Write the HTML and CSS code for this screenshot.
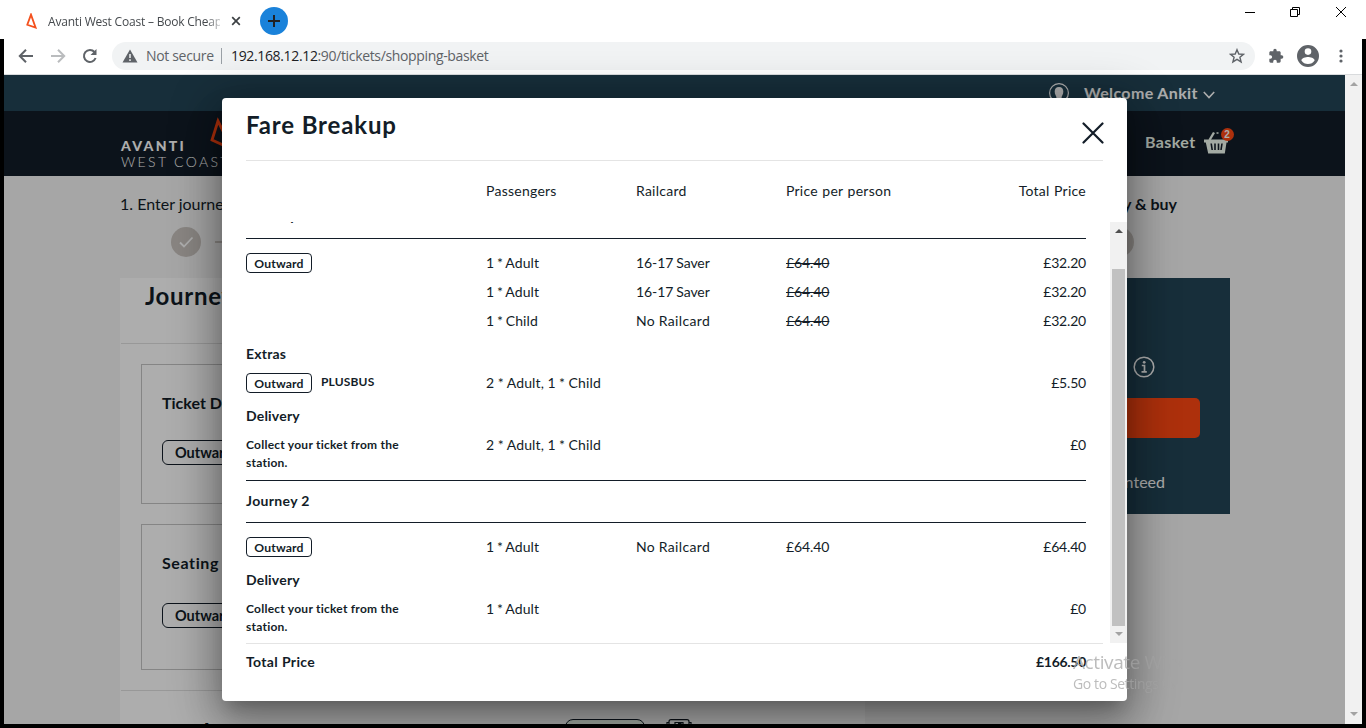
FILE: index.html
```html
<!DOCTYPE html>
<html lang="en">
<head>
<meta charset="utf-8">
<title>Avanti West Coast – Book Cheap</title>
<link rel="stylesheet" href="styles.css">
</head>
<body>
<div class="window">
  <div class="tabbar">
    <svg class="favicon" width="12" height="16" viewBox="0 0 12 16"><path d="M5 1.600 1.300 11.800 9.600 14.600Z" fill="none" stroke="#f4511e" stroke-width="1.800"/></svg>
    <span class="tab-title">Avanti West Coast – Book Cheap</span>
    <svg class="tab-close" width="10" height="10" viewBox="0 0 10 10"><path d="M1.200 1.200 8.800 8.800M8.800 1.200 1.200 8.800" stroke="#3c4043" stroke-width="1.700"/></svg>
    <span class="new-tab"><svg width="14" height="14" viewBox="0 0 14 14"><path d="M7 1V13M1 7H13" stroke="#202124" stroke-width="2"/></svg></span>
    <div class="win-controls">
      <svg width="10" height="12" viewBox="0 0 10 12"><path d="M0 6.500H10" stroke="#000"/></svg>
      <svg width="10" height="12" viewBox="0 0 10 12"><path d="M.5 3.500H7.500V10.500H.5ZM2.500 3.500V1.500H9.500V8.500H7.500" fill="none" stroke="#000"/></svg>
      <svg width="10" height="12" viewBox="0 0 10 12"><path d="M0 1 10 11M10 1 0 11" stroke="#000"/></svg>
    </div>
  </div>
  <div class="viewport">
    <div class="toolbar">
      <svg class="nav-ico" width="16" height="16" viewBox="0 0 16 16"><path d="M15 8H2M8 1.800 1.800 8 8 14.200" fill="none" stroke="#5f6368" stroke-width="2"/></svg>
      <svg class="nav-ico" width="16" height="16" viewBox="0 0 16 16"><path d="M1 8H14M8 1.800 14.200 8 8 14.200" fill="none" stroke="#babcbe" stroke-width="2"/></svg>
      <svg class="nav-ico" width="16" height="16" viewBox="0 0 16 16"><path d="M13.600 10A6 6 0 1 1 12.500 4" fill="none" stroke="#5f6368" stroke-width="2"/><path d="M14.500 1V7H8.500Z" fill="#5f6368"/></svg>
      <div class="omnibox">
        <svg width="16" height="14" viewBox="0 0 16 14"><path d="M8 .5 15.500 13.500H.5Z" fill="#5f6368"/><path d="M8 5V9M8 10.300V12" stroke="#f1f3f4" stroke-width="1.500"/></svg>
        <span class="secure">Not secure</span><span class="bar"></span>
        <span class="url"><b>192.168.12.12</b>:90/tickets/shopping-basket</span>
        <svg class="star" width="16" height="16" viewBox="0 0 16 16"><path d="M8 1.700 9.800 6 14.500 6.300 10.900 9.300 12.100 13.900 8 11.400 3.900 13.900 5.100 9.300 1.500 6.300 6.200 6Z" fill="none" stroke="#5f6368" stroke-width="1.400"/></svg>
      </div>
      <svg class="puzzle" width="16" height="16" viewBox="0 0 24 24"><path d="M20.500 11H19V7c0-1.100-.9-2-2-2h-4V3.500a2.500 2.500 0 0 0-5 0V5H4c-1.100 0-2 .9-2 2v3.800h1.500a2.700 2.700 0 0 1 0 5.400H2V20c0 1.100.9 2 2 2h3.800v-1.500a2.700 2.700 0 0 1 5.400 0V22H17c1.100 0 2-.9 2-2v-4h1.500a2.500 2.500 0 0 0 0-5z" fill="#5f6368"/></svg>
      <svg class="avatar" width="22" height="22" viewBox="2 2 20 20"><path d="M12 2a10 10 0 1 0 0 20 10 10 0 0 0 0-20zm0 3a3 3 0 1 1 0 6 3 3 0 0 1 0-6zm0 14.200a7.200 7.200 0 0 1-6-3.220c.03-1.990 4-3.080 6-3.080s5.970 1.090 6 3.080a7.200 7.200 0 0 1-6 3.220z" fill="#5f6368"/></svg>
      <svg class="dots" width="4" height="14" viewBox="0 0 4 14"><g fill="#5f6368"><circle cx="2" cy="2" r="1.600"/><circle cx="2" cy="7" r="1.600"/><circle cx="2" cy="12" r="1.600"/></g></svg>
    </div>
    <div class="content">
      <div class="site">
        <div class="userbar">
          <svg width="22" height="22" viewBox="0 0 22 22"><circle cx="11" cy="11" r="9.400" fill="none" stroke="#fff" stroke-width="1.200"/><path d="M11 5c-3 0-4.300 2-4.300 4.500 0 3 1.300 4 1.700 5.500v2.500h5.200V15c.4-1.500 1.700-2.500 1.700-5.500C15.300 7 14 5 11 5z" fill="#fff"/></svg>
          <span class="welcome">Welcome Ankit</span>
          <svg class="chevron" width="12" height="8" viewBox="0 0 12 8"><path d="M.8 1 6 6.500 11.200 1" fill="none" stroke="#fff" stroke-width="1.600"/></svg>
        </div>
        <div class="navbar">
          <div class="logo"><strong>AVANTI</strong><span>WEST COAST</span></div>
          <svg class="logo-mark" width="30" height="36" viewBox="0 0 30 36"><path d="M8 5 2 24 22 33Z" fill="none" stroke="#ff4713" stroke-width="2.800"/></svg>
          <div class="basket"><span>Basket</span>
            <span class="basket-ico"><svg width="28" height="26" viewBox="0 0 28 26"><path d="M0 9.500H24V12.500H22.500L20.800 23.500H4.200L1.800 12.500H0Z" fill="#f1fbf0"/><path d="M5.500 10 10 2.500" stroke="#f1fbf0" stroke-width="2.400"/><path d="M12.500 3h2" stroke="#f1fbf0" stroke-width="1.500"/><path d="M7.200 13.500 8.200 20M11 13.500V20M14.500 13.500V20M18 13.500 17 20" stroke="#131d28" stroke-width="1.600"/></svg><i>2</i></span>
          </div>
        </div>
        <div class="steps">
          <div class="step first"><span>1. Enter journey details</span><div class="track"><svg class="check" width="30" height="30" viewBox="0 0 30 30"><circle cx="15" cy="15" r="15" fill="#cac5c0"/><path d="M9 15.500 13 19.500 21.500 10.500" fill="none" stroke="#fff" stroke-width="1.800"/></svg><hr></div></div>
          <div class="step last"><span>4. Pay &amp; buy</span><i></i></div>
        </div>
        <div class="columns">
          <div class="card">
            <h2>Journey</h2>
            <div class="panel"><h3>Ticket Delivery</h3><span class="tag">Outward</span></div>
            <div class="panel second"><h3>Seating</h3><span class="tag">Outward</span></div>
            <div class="travel"><h2>Travel</h2><span class="stub"></span>
              <svg width="26" height="12" viewBox="0 0 26 12"><path d="M1 8V3.500H3M23 3.500H25V8M3 8V2.700Q3 .7 5 .7H21Q23 .7 23 2.700V8M9 8V3.500H17V8M12 4.500H15V8" fill="none" stroke="#10181f" stroke-width="1.200"/></svg></div>
          </div>
          <div class="summary">
            <svg width="22" height="22" viewBox="0 0 22 22"><circle cx="11" cy="11" r="9.800" fill="none" stroke="#fff" stroke-width="1.500"/><path d="M8.800 9.500H11.500V15.500M8.500 15.800H13.800" fill="none" stroke="#fff" stroke-width="1.700"/><circle cx="11.200" cy="6.300" r="1.400" fill="#fff"/></svg>
            <div class="cta"></div><p>guaranteed</p>
          </div>
        </div>
        <div class="backdrop"></div>
      </div>
      <div class="scrollbar"><b class="up"></b><b class="down"></b></div>
    </div>
  </div>
</div>

<div class="modal">
  <div class="modal-head"><h1>Fare Breakup</h1><svg width="22" height="22" viewBox="0 0 22 22"><path d="M1.500 1.500 20.500 20.500M20.500 1.500 1.500 20.500" stroke="#131d28" stroke-width="2.200" stroke-linecap="round"/></svg></div>
  <div class="row head"><span></span><span>Passengers</span><span>Railcard</span><span>Price per person</span><span class="r">Total Price</span></div>
  <div class="scroller">
    <div class="list">
      <div class="journey top">Journey 1</div>
      <div class="row pad"><span><em class="pill">Outward</em></span><span class="who">1 * Adult</span><span class="num">16-17 Saver</span><s>£64.40</s><span class="r num">£32.20</span></div>
      <div class="row"><span></span><span class="who">1 * Adult</span><span class="num">16-17 Saver</span><s>£64.40</s><span class="r num">£32.20</span></div>
      <div class="row"><span></span><span class="who">1 * Child</span><span class="card-name">No Railcard</span><s>£64.40</s><span class="r num">£32.20</span></div>
      <div class="group">Extras</div>
      <div class="row"><span><em class="pill">Outward</em><small>PLUSBUS</small></span><span>2 * Adult, 1 * Child</span><span></span><span></span><span class="r num">£5.50</span></div>
      <div class="group">Delivery</div>
      <div class="row tall"><p>Collect your ticket from the station.</p><span>2 * Adult, 1 * Child</span><span></span><span></span><span class="r num">£0</span></div>
      <div class="journey">Journey 2</div>
      <div class="row pad"><span><em class="pill">Outward</em></span><span class="who">1 * Adult</span><span class="card-name">No Railcard</span><span class="num">£64.40</span><span class="r num">£64.40</span></div>
      <div class="group">Delivery</div>
      <div class="row tall"><p>Collect your ticket from the station.</p><span class="who">1 * Adult</span><span></span><span></span><span class="r num">£0</span></div>
    </div>
    <div class="inner-bar"><b class="up dark"></b><div class="thumb"></div><b class="down"></b></div>
  </div>
  <div class="total"><span>Total Price</span><span class="amount">£166.50</span></div>
</div>
<div class="watermark"><div>Activate Windows</div><p>Go to Settings to</p></div>
</body>
</html>
```
FILE: styles.css
```css
* { box-sizing: border-box; }
body, h1, h2, h3, p { margin: 0; }
body { width: 1366px; height: 728px; overflow: hidden; position: relative; background: #fff; font-family: Lato, sans-serif; color: #131d28; }
svg { display: block; flex: none; }
.window { display: flex; flex-direction: column; height: 728px; }

.tabbar { height: 39px; display: flex; align-items: center; padding: 3px 20px 0 26px; font: 12px "Open Sans", sans-serif; }
.tab-title { margin-left: 10px; width: 172px; overflow: hidden; white-space: nowrap; letter-spacing: -.2px; color: #45494d; -webkit-mask-image: linear-gradient(90deg, #000 92%, transparent 103%); }
.tab-close { margin-left: 11px; }
.new-tab { width: 28px; height: 28px; margin-left: 19px; border-radius: 50%; background: #1a82da; display: grid; place-items: center; }
.win-controls { margin-left: auto; display: flex; gap: 36px; align-self: flex-start; padding-top: 3px; }
.win-controls svg:first-child { margin-right: -1px; }

.viewport { flex: 1; display: flex; flex-direction: column; border: solid #000; border-width: 0 4px 4px; }
.toolbar { height: 36px; display: flex; align-items: center; padding: 0 18px 2px 14px; border-bottom: 1px solid #d9dbdd; background: #fff; }
.nav-ico { margin-right: 16px; }
.omnibox { flex: none; width: 1143px; height: 28px; margin-left: -2px; padding: 0 10px; border-radius: 14px; background: #f1f3f4; display: flex; align-items: center; font: 14px "Open Sans", sans-serif; color: #5f6368; }
.secure { margin-left: 8px; width: 67px; white-space: nowrap; letter-spacing: -.33px; }
.bar { width: 1px; height: 16px; margin: 0 9px 0 8px; background: #9aa0a6; }
.url { letter-spacing: -.35px; }
.url b { font-weight: 400; color: #202124; }
.star { margin-left: auto; }
.puzzle { margin-left: 13px; }
.avatar { margin-left: 13px; }
.dots { margin-left: 20px; }

.content { flex: 1; display: flex; min-height: 0; }
.site { width: 1341px; height: 649px; overflow: hidden; position: relative; background: #f5f5f5; }
.backdrop { position: absolute; inset: 0; background: rgba(0,0,0,.32); }
.scrollbar { width: 17px; background: #f1f1f1; display: flex; flex-direction: column; justify-content: space-between; align-items: center; padding: 7px 0 8px; }
.up, .down { border: 4px solid transparent; border-top: 0; border-bottom-color: #a3a3a3; }
.down { border-top: 4px solid #a3a3a3; border-bottom: 0; }
.up.dark { border-bottom-color: #505050; }

.userbar { height: 36px; background: #234556; display: flex; align-items: center; padding-left: 1044px; color: #fff; font-size: 16px; font-weight: 700; }
.welcome { margin: 0 5px 2px 14px; letter-spacing: .36px; }
.chevron { margin-top: 3px; }
.navbar { height: 65px; background: #131d28; display: flex; padding-left: 116px; color: #fff; }
.logo { display: flex; flex-direction: column; width: 88px; padding: 27px 0 0 1px; font-size: 14px; line-height: 16px; white-space: nowrap; }
.logo strong { font-weight: 900; letter-spacing: 2.3px; }
.logo span { font-weight: 300; letter-spacing: 2.35px; }
.logo-mark { margin: 5px 0 0 2px; }
.basket { display: flex; align-items: center; gap: 9px; margin-left: 905px; height: 63px; font-weight: 700; font-size: 16px; letter-spacing: .4px; color: #f1fbf0; }
.basket > span:first-child { padding-bottom: 2px; }
.basket-ico { position: relative; padding-top: 1px; }
.basket-ico i { position: absolute; top: -1px; left: 16px; width: 13px; height: 13px; border-radius: 50%; background: #ff4713; color: #fff; font: bold 10px/13px "Liberation Sans", sans-serif; letter-spacing: 0; text-align: center; }
.basket-ico svg { width: 28px; margin-left: -1px; }
.steps { height: 102px; display: flex; justify-content: space-between; padding: 18px 168px 0 116px; font-size: 16px; line-height: 20px; }
.step.first { width: 240px; }
.track { display: flex; align-items: center; gap: 14px; padding: 13px 0 0 51px; }
.track hr { flex: 1; border: 0; margin: 0; height: 2px; background: #cac5c0; }
.step.last { display: flex; flex-direction: column; font-weight: 700; }
.step.last i { width: 30px; height: 30px; margin: 13px 0 0 15px; border-radius: 50%; background: #cac5c0; }
.columns { display: flex; align-items: flex-start; margin-left: 116px; }
.card { width: 745px; height: 600px; background: #fff; }
.card h2 { height: 66px; margin-left: 1px; border-bottom: 1px solid #e0e0e0; padding-left: 24px; font-size: 24px; line-height: 36px; letter-spacing: .7px; }
.panel { height: 140px; margin: 20px 21px 0; border: 1px solid #c4c4c4; padding: 28px 20px; }
.panel.second { height: 146px; margin-bottom: 20px; }
.panel h3 { font-size: 16px; line-height: 20px; }
.panel.second h3 { letter-spacing: .6px; }
.tag { display: inline-block; margin-top: 27px; width: 90px; height: 25px; border: 1px solid #131d28; border-radius: 6px; padding-left: 12px; font-size: 14.5px; line-height: 24px; font-weight: 700; }
.panel.second .tag { margin-top: 30px; }
.travel { display: flex; border-top: 1px solid #e0e0e0; padding-top: 28px; margin-left: 1px; }
.travel h2 { width: 423px; height: 28px; border: 0; margin: 0; padding-left: 20px; line-height: 28px; letter-spacing: 1px; }
.stub { width: 80px; height: 28px; margin: 0 21px; border: 1px solid #131d28; border-radius: 8px; background: #f1fbf0; }
.summary { width: 350px; height: 236px; margin-left: 15px; background: #234556; padding: 78px 30px 0; color: #fff; }
.summary svg { margin-left: 223px; }
.cta { height: 40px; margin-top: 20px; border-radius: 5px; background: #ff4713; }
.summary p { margin-top: 34px; padding-right: 35px; text-align: right; font-size: 16px; line-height: 20px; }

.modal { position: absolute; left: 222px; top: 98px; width: 905px; height: 603px; background: #fff; border-radius: 4px; box-shadow: 0 11px 15px -7px rgba(0,0,0,.2), 0 24px 38px 3px rgba(0,0,0,.14), 0 9px 46px 8px rgba(0,0,0,.3); font-size: 14px; }
.modal-head { height: 63px; margin: 0 24px; border-bottom: 1px solid #e4e4e4; display: flex; justify-content: space-between; }
.modal-head h1 { font-size: 24px; line-height: 54px; letter-spacing: .85px; }
.modal-head svg { margin: 24px -1px 0 0; }
.row { display: grid; grid-template-columns: 240px 150px 150px 150px 150px; height: 29px; line-height: 27px; letter-spacing: .15px; word-spacing: -.35px; white-space: nowrap; }
.row.head { height: 61px; line-height: 60px; margin-left: 24px; letter-spacing: .25px; word-spacing: .6px; }
.who { word-spacing: -1.1px; }
.num { letter-spacing: -.1px; }
.row s { letter-spacing: -.1px; }
.card-name { letter-spacing: .35px; }
.r { text-align: right; }
.r.num { letter-spacing: -.2px; }
.scroller { display: flex; justify-content: space-between; height: 421px; padding-left: 24px; overflow: hidden; }
.list { width: 840px; margin-top: -25px; }
.journey { height: 43px; line-height: 39px; border: solid #131d28; border-width: 1px 0; font-weight: 700; letter-spacing: .35px; }
.journey.top { height: 42px; line-height: 38px; border-top: 0; letter-spacing: .2px; }
.row.pad { margin-top: 10px; }
.pill { display: inline-block; vertical-align: top; margin-top: 4px; width: 66px; height: 20px; border: 1px solid #131d28; border-radius: 4px; font: bold 12.2px/20px Lato, sans-serif; text-align: center; }
.row small { display: inline-block; margin: -1px 0 0 9px; vertical-align: top; font-size: 12px; font-weight: 700; }
.group { height: 33px; padding-top: 3px; line-height: 30px; font-weight: 700; letter-spacing: .2px; }
.row.tall { height: 49px; }
.row p { padding-top: 5px; width: 170px; white-space: normal; font-size: 12px; line-height: 18px; font-weight: 700; letter-spacing: .24px; word-spacing: 0; }
.inner-bar { width: 17px; background: #f1f1f1; display: flex; flex-direction: column; align-items: center; padding-top: 7px; }
.thumb { width: 13px; height: 357px; margin: 36px 0 6px; background: #c1c1c1; }
.total { margin: 0 24px; border-top: 1px solid #e4e4e4; display: flex; justify-content: space-between; padding-right: 17px; line-height: 35px; font-weight: 700; letter-spacing: .35px; }
.amount { letter-spacing: -.3px; }
.watermark { position: absolute; left: 1073px; top: 651px; width: 160px; overflow: hidden; white-space: nowrap; font: 19px/22px "Open Sans", sans-serif; letter-spacing: -.4px; color: rgba(165,165,165,.75); -webkit-mask-image: linear-gradient(90deg, #000 35%, transparent 68%); }
.watermark p { font-size: 14px; line-height: 22px; }
```
